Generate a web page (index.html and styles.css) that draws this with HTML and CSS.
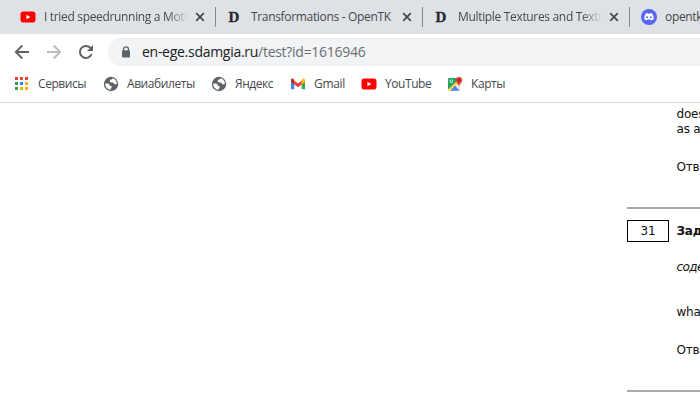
FILE: index.html
```html
<!DOCTYPE html>
<html lang="ru">
<head>
<meta charset="utf-8">
<title>Browser</title>
<link rel="stylesheet" href="styles.css">
</head>
<body>
<svg class="defs" width="0" height="0">
  <symbol id="x" viewBox="0 0 10 10"><path d="M1.200 1.200l7.600 7.600M8.800 1.200L1.200 8.800" stroke="#45494d" stroke-width="1.700" fill="none"/></symbol>
  <symbol id="yt" viewBox="0 0 16 16"><rect x=".5" y="2.500" width="15" height="11" rx="2.800" fill="#f00"/><path d="M6.400 5.700v4.600l4-2.300z" fill="#fff"/></symbol>
  <symbol id="globe" viewBox="0 0 16 16"><circle cx="8" cy="8" r="7.200" fill="#5f6368"/><path d="M2.200 7.600c1.600-.3 3.600-.2 4.300.8.6 1 .2 1.500 1.500 1.700 1 .2.9 1.300.2 1.800-.6.500-.5 1.500-.7 2C4.500 13.700 2 11 2.200 7.600zM9.500 2.200c-.2 1-.8 1.200-1.600 1.300-1 .2-.6 1.300-1.300 1.700.2 1.200 1.900 1.300 3.200 1.400.9.100.8 1.500 1.900 1.700.9.200 1.300-.3 2.200-.3C14 5.200 12.300 2.900 9.500 2.200z" fill="#fff"/></symbol>
</svg>
<nav class="tabs">
  <div class="tab first"><svg class="fav"><use href="#yt"/></svg><span class="title fade">I tried speedrunning a Moth</span><svg class="close"><use href="#x"/></svg></div>
  <div class="tab second"><b class="fav serif">D</b><span class="title">Transformations - OpenTK</span><svg class="close"><use href="#x"/></svg></div>
  <div class="tab third"><b class="fav serif">D</b><span class="title fade">Multiple Textures and Textu</span><svg class="close"><use href="#x"/></svg></div>
  <div class="tab fourth"><svg class="fav" viewBox="0 0 16 16"><circle cx="8" cy="8" r="8" fill="#5865f2"/><path d="M4.900 4.600l1.800-.6.500.7h1.600l.5-.7 1.800.6c1.200 1.800 1.700 3.600 1.500 5.600-.8.700-1.500 1-2.200 1.200l-.7-1H6.300l-.7 1c-.8-.2-1.500-.5-2.200-1.200-.2-2 .3-3.800 1.500-5.600z" fill="#fff"/><circle cx="6.200" cy="8.200" r="1" fill="#5865f2"/><circle cx="9.800" cy="8.200" r="1" fill="#5865f2"/></svg><span class="title">opentk</span></div>
</nav>
<div class="toolbar">
  <svg class="nav" viewBox="0 0 16 16"><path d="M15 8H2M8.300 1.500L1.800 8l6.500 6.500" fill="none" stroke="#5f6368" stroke-width="1.900"/></svg>
  <svg class="nav" viewBox="0 0 16 16"><path d="M1 8h13M7.700 1.500L14.200 8l-6.500 6.500" fill="none" stroke="#babcbe" stroke-width="1.900"/></svg>
  <svg class="nav" viewBox="0 0 16 16"><path d="M13.500 10.200A6 6 0 1 1 12.300 3.800L13.800 5.300" fill="none" stroke="#5f6368" stroke-width="2"/><path d="M15 1v6H9z" fill="#5f6368"/></svg>
  <div class="omnibox">
    <svg class="lock" viewBox="0 0 10 12"><path d="M2.500 5V3.300a2.500 2.500 0 0 1 5 0V5" fill="none" stroke="#5f6368" stroke-width="1.300"/><rect x="1" y="4.300" width="8" height="7.200" rx="1" fill="#5f6368"/></svg>
    <span class="url"><span class="host">en-ege.sdamgia.ru</span>/test?id=1616946</span>
  </div>
</div>
<div class="bookmarks">
  <a class="bm b1"><svg viewBox="0 0 16 16"><path d="M1 1h3v3H1zM6 1h3v3H6zM11 1h3v3h-3z" fill="#ea4335"/><path d="M1 6h3v3H1zM1 11h3v3H1z" fill="#34a053"/><path d="M6 6h3v3H6z" fill="#1a88ff"/><path d="M11 6h3v3h-3zM11 11h3v3h-3zM6 11h3v3H6z" fill="#f9ab00"/></svg><span>Сервисы</span></a>
  <a class="bm b2"><svg><use href="#globe"/></svg><span>Авиабилеты</span></a>
  <a class="bm b3"><svg><use href="#globe"/></svg><span>Яндекс</span></a>
  <a class="bm b4"><svg viewBox="0 0 16 16"><path d="M1 4v9.300h3.300V6z" fill="#4285f4"/><path d="M11.700 6v7.300H15V4z" fill="#34a853"/><path d="M4.300 4.600L8 7.400l3.700-2.800v3.900L8 11.300 4.300 8.500z" fill="#ea4335"/><path d="M1 4.200C1 2.600 2.500 2.200 3.500 3l.8 1.600v3.900L1 6z" fill="#c5221f"/><path d="M15 4.200c0-1.600-1.500-2-2.500-1.200l-.8 1.600v3.900L15 6z" fill="#fbbc04"/></svg><span>Gmail</span></a>
  <a class="bm b5"><svg><use href="#yt"/></svg><span>YouTube</span></a>
  <a class="bm b6"><svg viewBox="0 0 16 16"><path d="M1.500 2H11l2.500 5v7.500h-12z" fill="#e8eaed"/><path d="M2 2h8.500L9.500 6 1 14V3z" fill="#1fa463"/><path d="M1 13.600L9.700 5.200l1.800 1.800-7.300 7.700H2z" fill="#ffd04b"/><path d="M3.300 14.700L8 9.700l4.700 5z" fill="#4285f4"/><circle cx="4.300" cy="5.300" r="1.400" fill="none" stroke="#fff" stroke-width=".8"/><path d="M12 1a3.200 3.200 0 0 1 3.200 3.200c0 2.200-2.200 3-3.200 6-1-3-3.200-3.800-3.200-6A3.200 3.200 0 0 1 12 1z" fill="#df3e34"/><circle cx="12" cy="4.200" r="1.200" fill="#8c2620"/></svg><span>Карты</span></a>
</div>
<main class="page">
  <section class="task previous">
    <p>does<br>as a</p>
    <p class="answer">Ответ</p>
  </section>
  <section class="task">
    <div class="heading"><span class="number">31</span><b>Задание</b></div>
    <p class="source">содержание</p>
    <p class="question">what</p>
    <p class="answer">Ответ</p>
  </section>
</main>
</body>
</html>
```

FILE: styles.css
```css
* { box-sizing: border-box; }
body { margin: 0; width: 700px; height: 400px; overflow: hidden; background: #fff; font: 12px/16px "Open Sans", "Noto Sans", sans-serif; color: #45494d; }
.defs { display: block; height: 0; }
.tabs { display: flex; height: 34px; background: #dee1e6; overflow: hidden; }
.tab { display: flex; align-items: center; flex: none; position: relative; height: 34px; white-space: nowrap; }
.tab + .tab::before { content: ""; position: absolute; left: 0; top: 7px; width: 1px; height: 20px; background: #85888c; }
.first { width: 215px; padding-left: 20px; }
.second { width: 207px; padding-left: 12px; }
.third { width: 207px; padding-left: 12px; }
.fourth { width: 71px; padding-left: 12px; overflow: hidden; }
.fav { width: 16px; height: 16px; flex: none; margin-right: 8px; }
.serif { font: bold 15px/16px "Liberation Serif", serif; color: #25282b; text-align: center; -webkit-text-stroke: .3px #25282b; padding-right: 2px; }
.title { width: 144px; overflow: hidden; flex: none; letter-spacing: -.33px; }
.fade { -webkit-mask-image: linear-gradient(90deg, #000 124px, transparent); mask-image: linear-gradient(90deg, #000 124px, transparent); }
.close { width: 10px; height: 10px; margin-left: 7px; }
.toolbar { display: flex; align-items: center; height: 36px; padding-left: 14px; }
.nav { width: 16px; height: 16px; margin-right: 16px; flex: none; }
.omnibox { display: flex; align-items: center; flex: none; height: 28px; width: 592px; margin-left: -2px; padding-left: 13px; border-radius: 14px 0 0 14px; background: #f1f3f4; }
.lock { width: 10px; height: 12px; margin-right: 11px; }
.url { font-size: 14px; color: #6a6e73; white-space: nowrap; letter-spacing: -.28px; }
.host { color: #202124; }
.bookmarks { display: flex; height: 33px; padding: 5px 0 0 14px; border-bottom: 1px solid #d5d7da; letter-spacing: -.43px; }
.bm { display: flex; align-items: center; flex: none; height: 18px; white-space: nowrap; }
.bm svg { width: 16px; height: 16px; margin-right: 8px; flex: none; }
.b1 { width: 89px; }
.b2 { width: 108px; }
.b3 { width: 79px; }
.b4 { width: 71px; letter-spacing: -.3px; }
.b5 { width: 86px; }
.page { margin-left: 627px; width: 73px; overflow: hidden; white-space: nowrap; color: #111; font: 12px/15px "DejaVu Sans", sans-serif; letter-spacing: -.2px; }
.page p { margin: 0 0 0 49.500px; }
.task { height: 183px; border-bottom: 2px solid #a9a9a9; }
.previous { height: 106px; padding-top: 4px; }
.previous .answer { margin-top: 23px; }
.heading { display: flex; align-items: center; padding-top: 11px; }
.number { flex: none; width: 42px; height: 22px; margin-right: 7.500px; border: 1px solid #000; text-align: center; line-height: 20px; }
.heading b { padding-top: 1px; }
.page .source { margin-top: 18px; font-style: italic; letter-spacing: -.6px; }
.page .question { margin-top: 30px; }
.page .answer { margin-top: 23px; }
```
